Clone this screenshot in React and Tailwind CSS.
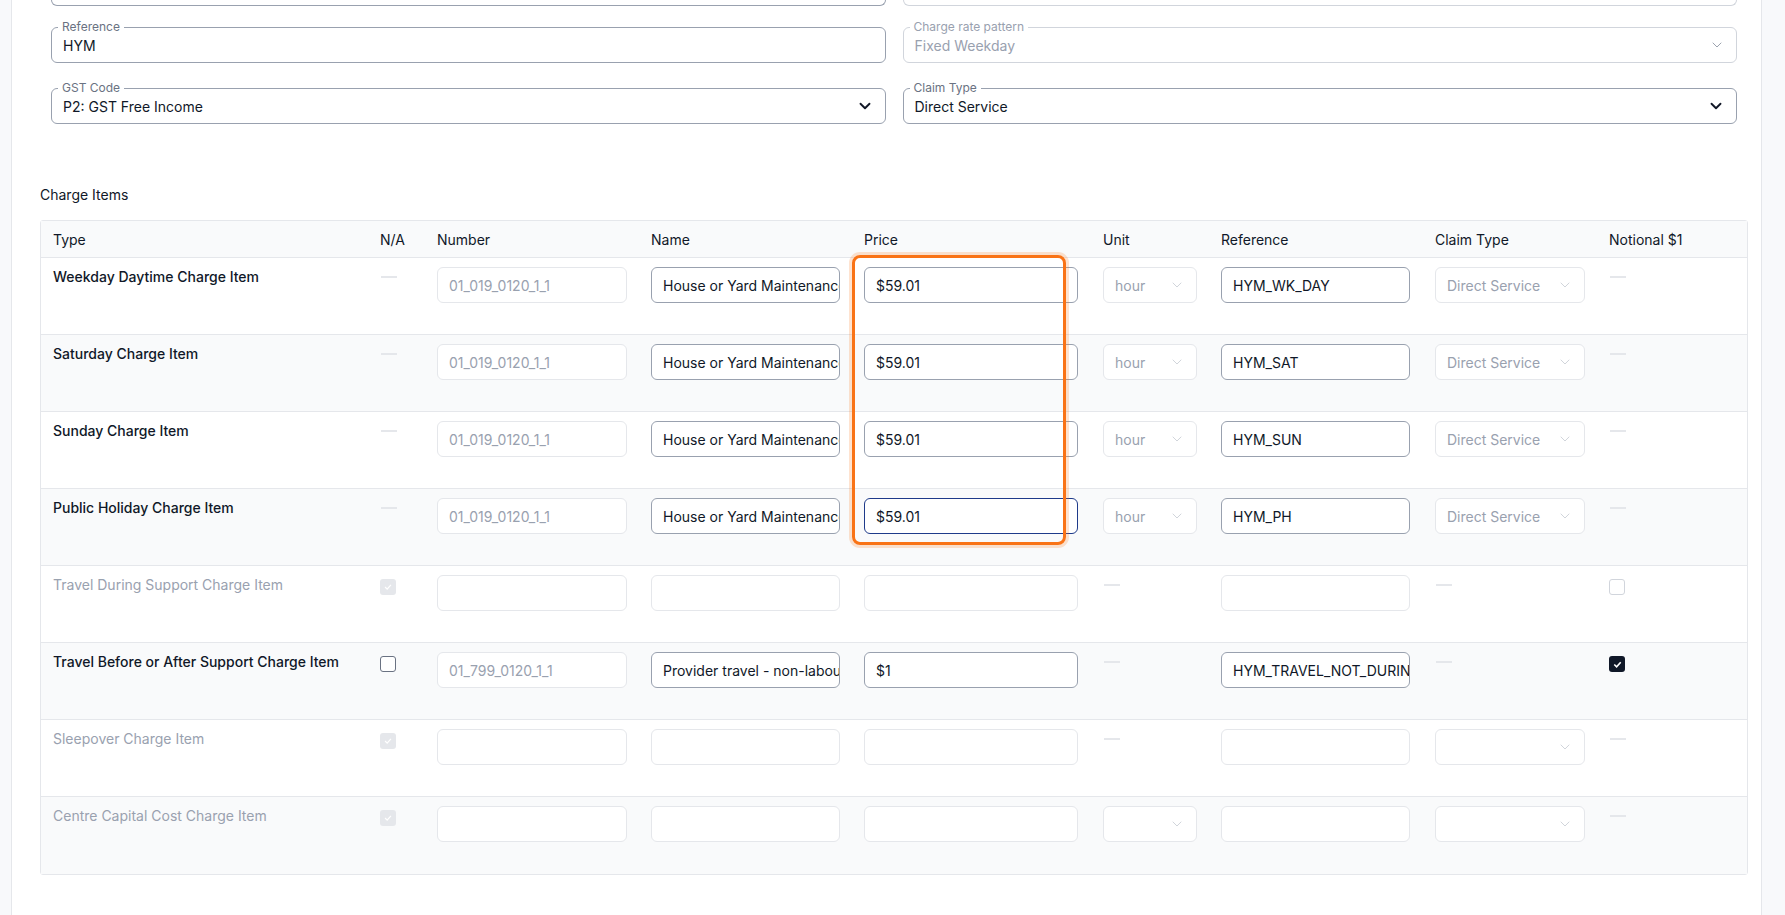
import React from "react";

const Chev = ({ c = "#111827", s = 16, w = 2 }) => (
  <svg width={s} height={s} viewBox="0 0 24 24" fill="none" stroke={c} strokeWidth={w} strokeLinecap="round" strokeLinejoin="round"><path d="M6 9l6 6 6-6" /></svg>
);

function Field({ label, value, select, disabled }) {
  return (
    <div className={`relative h-[36px] rounded-md border ${disabled ? "border-gray-300" : "border-gray-400"} flex items-center px-[11px]`}>
      <span className={`absolute -top-[9px] left-[6px] bg-white px-[4px] text-[12px] leading-[16px] ${disabled ? "text-gray-400" : "text-gray-500"}`}>{label}</span>
      <span className={`flex-1 text-[14px] ${disabled ? "text-gray-400" : "text-gray-900"}`}>{value}</span>
      {select && <Chev c={disabled ? "#9ca3af" : "#111827"} s={disabled ? 16 : 18} w={disabled ? 1.5 : 2.5} />}
    </div>
  );
}

const Dash = () => <div className="w-[16px] h-[2px] bg-gray-200 mt-[9px] ml-[1px]" />;

function Input({ v, w, muted, focus, enabled }) {
  let border = "border-gray-200";
  if (enabled) border = "border-gray-400";
  if (focus) border = "border-[#1e3a8a]";
  return (
    <div className={`h-[36px] rounded-md border ${border} bg-white flex items-center px-[11px] overflow-hidden whitespace-nowrap`} style={{ width: w }}>
      <span className={`text-[14px] ${muted ? "text-gray-400" : "text-gray-900"}`}>{v}</span>
    </div>
  );
}

function Sel({ v, w }) {
  return (
    <div className="h-[36px] rounded-md border border-gray-200 bg-white flex items-center justify-between px-[11px]" style={{ width: w }}>
      <span className="text-[14px] text-gray-400 whitespace-nowrap">{v}</span>
      <Chev c="#d1d5db" s={16} w={1.5} />
    </div>
  );
}

const DisCheck = () => (
  <div className="w-[16px] h-[16px] rounded-[3px] bg-gray-200 flex items-center justify-center mt-[4px]">
    <svg width="10" height="10" viewBox="0 0 24 24" fill="none" stroke="#fff" strokeWidth="3"><path d="M5 12l5 5 9-10" /></svg>
  </div>
);

const rows = [
  { t: "Weekday Daytime Charge Item", ref: "HYM_WK_DAY", full: true },
  { t: "Saturday Charge Item", ref: "HYM_SAT", full: true },
  { t: "Sunday Charge Item", ref: "HYM_SUN", full: true },
  { t: "Public Holiday Charge Item", ref: "HYM_PH", full: true, focus: true },
  { t: "Travel During Support Charge Item", kind: "tds" },
  { t: "Travel Before or After Support Charge Item", kind: "tba" },
  { t: "Sleepover Charge Item", kind: "sleep" },
  { t: "Centre Capital Cost Charge Item", kind: "ccc" },
];

const cols = "grid grid-cols-[339px_57px_214px_213px_239px_118px_214px_174px_1fr]";

export default function App() {
  return (
    <div className="min-h-[915px] bg-[#f8f9fb] flex" style={{ fontFamily: "Inter, 'Noto Sans', sans-serif" }}>
      <div className="ml-[11px] w-[1751px] bg-white border-x border-gray-200 h-[915px] overflow-hidden">
        <div className="pl-[28px] pr-[14px]">
          <div className="grid grid-cols-2 gap-x-[17px] pl-[11px] pr-[10px]">
            <div className="h-[6px] border-x border-b border-gray-400 rounded-b-md" />
            <div className="h-[6px] border-x border-b border-gray-300 rounded-b-md" />
          </div>
          <div className="grid grid-cols-2 gap-x-[17px] gap-y-[25px] pl-[11px] pr-[10px] mt-[21px]">
            <Field label="Reference" value="HYM" />
            <Field label="Charge rate pattern" value="Fixed Weekday" select disabled />
            <Field label="GST Code" value="P2: GST Free Income" select />
            <Field label="Claim Type" value="Direct Service" select />
          </div>
          <div className="mt-[61px] text-[14px] text-gray-900 leading-[20px]">Charge Items</div>
          <div className="relative mt-[15px] w-[1708px] border border-gray-200 rounded-[3px]">
            <div className={`${cols} h-[37px] items-center bg-[#f9fafb] border-b border-gray-200 text-[14px] text-gray-900`}>
              <div className="pl-[12px]">Type</div>
              <div>N/A</div><div>Number</div><div>Name</div><div>Price</div><div>Unit</div><div>Reference</div><div>Claim Type</div><div>Notional $1</div>
            </div>
            {rows.map((r, i) => {
              const dis = r.kind === "tds" || r.kind === "sleep" || r.kind === "ccc";
              return (
                <div key={i} className={`${cols} h-[77px] pt-[9px] ${i % 2 ? "bg-[#f9fafb]" : "bg-white"} ${i < 7 ? "border-b border-gray-200" : ""}`}>
                  <div className={`pl-[12px] pt-[1px] text-[14px] leading-[18px] ${dis ? "text-gray-400" : "text-gray-900 font-medium"}`}>{r.t}</div>
                  <div>
                    {r.full && <Dash />}
                    {dis && <DisCheck />}
                    {r.kind === "tba" && <div className="w-[16px] h-[16px] rounded-[3px] border border-gray-500 bg-white mt-[4px]" />}
                  </div>
                  <div>
                    {r.full || r.kind === "tba" ? <Input w={190} v={r.kind === "tba" ? "01_799_0120_1_1" : "01_019_0120_1_1"} muted /> : <Input w={190} v="" />}
                  </div>
                  <div>
                    {r.full ? <Input w={189} v="House or Yard Maintenance" enabled /> : r.kind === "tba" ? <Input w={189} v="Provider travel - non-labour costs" enabled /> : <Input w={189} v="" />}
                  </div>
                  <div>
                    {r.full ? <Input w={214} v="$59.01" enabled focus={r.focus} /> : r.kind === "tba" ? <Input w={214} v="$1" enabled /> : <Input w={214} v="" />}
                  </div>
                  <div>
                    {r.full ? <Sel w={94} v="hour" /> : r.kind === "ccc" ? <Sel w={94} v="" /> : <Dash />}
                  </div>
                  <div>
                    {r.full ? <Input w={189} v={r.ref} enabled /> : r.kind === "tba" ? <Input w={189} v="HYM_TRAVEL_NOT_DURING" enabled /> : <Input w={189} v="" />}
                  </div>
                  <div>
                    {r.full ? <Sel w={150} v="Direct Service" /> : r.kind === "sleep" || r.kind === "ccc" ? <Sel w={150} v="" /> : <Dash />}
                  </div>
                  <div>
                    {r.kind === "tds" ? <div className="w-[16px] h-[16px] rounded-[3px] border border-gray-300 bg-white mt-[4px]" /> :
                      r.kind === "tba" ? (
                        <div className="w-[16px] h-[16px] rounded-[3px] bg-gray-900 flex items-center justify-center mt-[4px]">
                          <svg width="11" height="11" viewBox="0 0 24 24" fill="none" stroke="#fff" strokeWidth="3.5"><path d="M5 12l5 5 9-10" /></svg>
                        </div>
                      ) : <Dash />}
                  </div>
                </div>
              );
            })}
            <div className="absolute left-[811px] top-[34px] w-[214px] h-[290px] rounded-lg border-[3px] border-[#f97316] shadow-[0_0_0_3px_rgba(249,115,22,0.2)] pointer-events-none" />
          </div>
        </div>
      </div>
    </div>
  );
}
